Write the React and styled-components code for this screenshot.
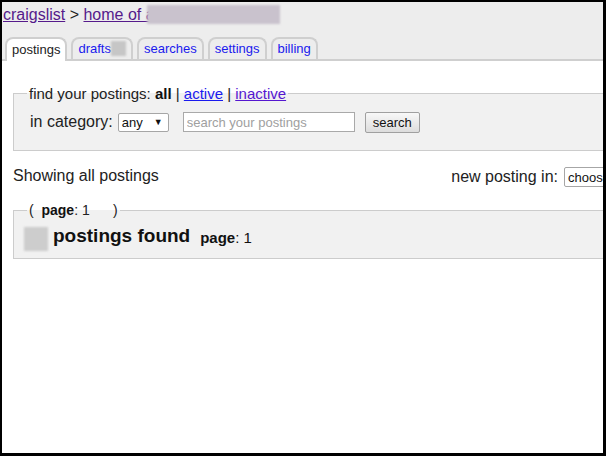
import React from "react";
import styled, { createGlobalStyle } from "styled-components";

const Global = createGlobalStyle`
  html, body { margin: 0; padding: 0; background: #fff; }
  body { font-family: "Liberation Sans", Arial, sans-serif; color: #222; }
  * { box-sizing: border-box; }
`;

const Frame = styled.div`
  width: 606px;
  height: 456px;
  border-style: solid;
  border-color: #000;
  border-width: 2px 3px 3px 2px;
  overflow: hidden;
  background: #fff;
  position: relative;
`;

const Header = styled.header`
  background: #ededed;
  width: 700px;
`;

const Crumbs = styled.div`
  display: flex;
  align-items: center;
  padding: 2px 0 0 1px;
  height: 23px;
  font-size: 16px;
  line-height: 19px;
  color: #222;
  white-space: pre;
`;

const VisitedLink = styled.a`
  color: #551a8b;
  text-decoration: underline;
`;

const Blur = styled.span`
  display: inline-block;
  width: ${(p) => p.$w}px;
  height: ${(p) => p.$h}px;
  margin-left: ${(p) => p.$ml || 0}px;
  background: ${(p) => p.$c || "#cccccc"};
  filter: blur(1px);
  vertical-align: middle;
  flex: none;
`;

const TabBar = styled.nav`
  display: flex;
  gap: 4px;
  margin-top: 12px;
  padding-left: 3px;
  border-bottom: 2px solid #cfcfcf;
  height: 24px;
  align-items: flex-end;
`;

const Tab = styled.a`
  display: flex;
  align-items: center;
  margin-bottom: ${(p) => (p.$active ? "-2px" : "0")};
  height: ${(p) => (p.$active ? "24px" : "22px")};
  padding: 0 5px 1px;
  border: 2px solid #cfcfcf;
  border-bottom: none;
  border-radius: 8px 8px 0 0;
  background: ${(p) => (p.$active ? "#fff" : "#ededed")};
  color: ${(p) => (p.$active ? "#222" : "#1a1aee")};
  font-size: 13px;
  line-height: 16px;
  text-decoration: none;
  white-space: nowrap;
`;

const Main = styled.main`
  width: 660px;
  padding: 24px 0 0 11px;
`;

const Fieldset = styled.fieldset`
  margin: 0;
  border: 1px solid #cccccc;
  background: #f1f1f1;
  padding: ${(p) => p.$pad};
  min-width: 0;
`;

const Legend = styled.legend`
  padding: 0 2px;
  margin-left: ${(p) => p.$shift}px;
  font-size: ${(p) => p.$size}px;
  line-height: 17px;
  color: #222;
  white-space: pre;
`;

const Link = styled.a`
  color: ${(p) => p.$c || "#1a1aee"};
  text-decoration: underline;
`;

const Bold = styled.b`
  font-weight: bold;
  color: #111;
`;

const SearchRow = styled.div`
  display: flex;
  align-items: center;
  height: 22px;
  font-size: 16px;
`;

const Label = styled.span`
  margin-right: 5px;
`;

const FakeSelect = styled.div`
  display: flex;
  align-items: center;
  justify-content: space-between;
  width: ${(p) => p.$w}px;
  height: ${(p) => p.$h}px;
  border: 1px solid #a6a6a6;
  border-radius: 2px;
  background: #fff;
  padding: 0 5px 0 3px;
  font-size: 13px;
  color: #111;
  margin-right: ${(p) => p.$mr || 0}px;
  flex: none;
  white-space: nowrap;
`;

const Arrow = styled.span`
  font-size: 9px;
  color: #111;
`;

const SearchInput = styled.input`
  width: 172px;
  height: 20px;
  border: 1px solid #a9a9a9;
  padding: 0 3px;
  font-family: inherit;
  font-size: 13px;
  margin-right: 10px;
  &::placeholder { color: #a0a0a0; }
`;

const Button = styled.button`
  height: 21px;
  padding: 0 7px;
  border: 1px solid #a0a0a0;
  border-radius: 2px;
  background: linear-gradient(#f8f8f8, #dddddd);
  font-family: inherit;
  font-size: 13px;
  color: #111;
`;

const StatusRow = styled.div`
  display: flex;
  justify-content: space-between;
  align-items: center;
  margin: 14px 0 16px;
  height: 21px;
`;

const Showing = styled.span`
  font-size: 16px;
  color: #222;
`;

const NewPosting = styled.div`
  display: flex;
  align-items: center;
  gap: 6px;
  font-size: 16px;
  color: #222;
  padding-top: 3px;
`;

const FoundRow = styled.div`
  display: flex;
  align-items: center;
  gap: 5px;
  height: 26px;
`;

const Found = styled.span`
  font-size: 19px;
  font-weight: bold;
  color: #111;
  margin-right: 5px;
  padding-bottom: 6px;
`;

const PageInfo = styled.span`
  font-size: 15px;
  color: #111;
  padding-bottom: 4px;
`;

export default function App() {
  return (
    <>
      <Global />
      <Frame>
        <Header>
          <Crumbs>
            <VisitedLink href="#">craigslist</VisitedLink>
            {" > "}
            <VisitedLink href="#">home of a</VisitedLink>
            <Blur $w={133} $h={19} $ml={-8} $c="#c9c2cd" />
          </Crumbs>
          <TabBar>
            <Tab $active href="#">postings</Tab>
            <Tab href="#">
              drafts
              <Blur $w={15} $h={15} $c="#c6c6c6" />
            </Tab>
            <Tab href="#">searches</Tab>
            <Tab href="#">settings</Tab>
            <Tab href="#">billing</Tab>
          </TabBar>
        </Header>
        <Main>
          <Fieldset $pad="9px 16px 17px">
            <Legend $size={15} $shift={-3}>
              {"find your postings: "}
              <Bold>all</Bold>
              {" | "}
              <Link href="#">active</Link>
              {" | "}
              <Link href="#" $c="#5517d0">inactive</Link>
            </Legend>
            <SearchRow>
              <Label>in category:</Label>
              <FakeSelect $w={51} $h={19} $mr={14}>
                <span>any</span>
                <Arrow>▼</Arrow>
              </FakeSelect>
              <SearchInput placeholder="search your postings" />
              <Button>search</Button>
            </SearchRow>
          </Fieldset>
          <StatusRow>
            <Showing>Showing all postings</Showing>
            <NewPosting>
              <span>new posting in:</span>
              <FakeSelect $w={98} $h={20}>
                <span>choose area</span>
                <Arrow>▼</Arrow>
              </FakeSelect>
            </NewPosting>
          </StatusRow>
          <Fieldset $pad="7px 10px 6px">
            <Legend $size={14} $shift={3}>
              {"(\u00a0\u00a0"}
              <Bold>page</Bold>
              {": 1\u00a0\u00a0\u00a0\u00a0\u00a0\u00a0)"}
            </Legend>
            <FoundRow>
              <Blur $w={24} $h={24} $c="#cdcdcd" />
              <Found>postings found</Found>
              <PageInfo>
                <Bold>page</Bold>: 1
              </PageInfo>
            </FoundRow>
          </Fieldset>
        </Main>
      </Frame>
    </>
  );
}
